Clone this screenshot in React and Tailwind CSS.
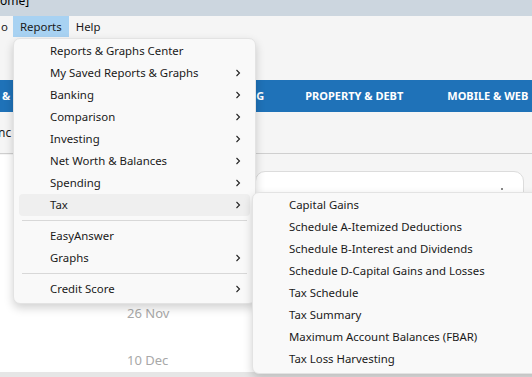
import React from 'react';

const font = { fontFamily: '"Segoe UI", "Noto Sans", "Open Sans", sans-serif' };

const Chevron = () => (
  <svg width="8" height="8" viewBox="0 0 8 8" className="text-[#222]">
    <path d="M2.5 1 L5.5 4 L2.5 7" fill="none" stroke="currentColor" strokeWidth="1.1" />
  </svg>
);

const mainItems = [
  { label: 'Reports & Graphs Center' },
  { label: 'My Saved Reports & Graphs', sub: true },
  { label: 'Banking', sub: true },
  { label: 'Comparison', sub: true },
  { label: 'Investing', sub: true },
  { label: 'Net Worth & Balances', sub: true },
  { label: 'Spending', sub: true },
  { label: 'Tax', sub: true, active: true },
  { sep: true },
  { label: 'EasyAnswer' },
  { label: 'Graphs', sub: true },
  { sep: true },
  { label: 'Credit Score', sub: true },
];

const taxItems = [
  'Capital Gains',
  'Schedule A-Itemized Deductions',
  'Schedule B-Interest and Dividends',
  'Schedule D-Capital Gains and Losses',
  'Tax Schedule',
  'Tax Summary',
  'Maximum Account Balances (FBAR)',
  'Tax Loss Harvesting',
];

const App = () => {
  return (
    <div className="relative w-[532px] h-[377px] overflow-hidden bg-[#f5f5f5] text-[11.4px] text-[#1a1a1a]" style={font}>
      {/* title bar */}
      <div className="h-[16px] bg-[#ccd6df] overflow-hidden">
        <div className="-mt-[7px] leading-[16px] text-[12px] text-black">ome]</div>
      </div>
      {/* menu bar */}
      <div className="h-[21px] flex items-stretch bg-[#f5f5f5]">
        <div className="w-[13px] overflow-hidden flex items-center justify-end pr-[5px]">
          <span>o</span>
        </div>
        <div className="px-[7px] flex items-center bg-[#a8d2f2]">Reports</div>
        <div className="px-[7px] flex items-center">Help</div>
      </div>
      <div className="h-[43px]" />
      {/* blue nav */}
      <div className="h-[32px] bg-[#1f72b8] flex items-center text-white font-bold text-[11px] whitespace-nowrap">
        <span className="ml-[2px]">&amp;</span>
        <span className="ml-[246px]">G</span>
        <span className="ml-[41px]">PROPERTY &amp; DEBT</span>
        <span className="ml-[44px]">MOBILE &amp; WEB</span>
      </div>
      {/* sub toolbar */}
      <div className="h-[42px] border-b border-[#cfcfcf] flex items-center">
        <span className="-ml-[2px] text-[12px]">nc</span>
      </div>
      {/* content */}
      <div className="flex">
        <div className="w-[255px]" />
        <div className="mt-[17px] w-[269px] h-[210px] bg-white border border-[#dcdcdc] rounded-t-[10px] relative">
          <div className="absolute right-[20px] top-[16px] w-[2px] h-[2px] bg-[#888]" />
        </div>
      </div>
      <div className="absolute left-[0px] top-[155px] w-[255px] h-[222px] bg-white flex flex-col items-start">
        <div className="ml-[127px] mt-[149px] text-[#a8a8a8] text-[13px]">26 Nov</div>
        <div className="ml-[127px] mt-[27px] text-[#a8a8a8] text-[13px]">10 Dec</div>
      </div>
      <div className="absolute left-0 right-0 bottom-0 h-[5px] bg-[#e6e6e6]" />

      {/* main dropdown */}
      <div className="absolute left-[13px] top-[38px] w-[243px] bg-[#f9f9f9] rounded-[7px] border border-[#e3e3e3] shadow-[0_4px_10px_rgba(0,0,0,0.18)] pt-[1px] pb-[3px] px-[5px]">
        {mainItems.map((it, i) =>
          it.sep ? (
            <div key={i} className="h-[9px] flex items-center px-[3px]">
              <div className="h-px w-full bg-[#d8d8d8]" />
            </div>
          ) : (
            <div
              key={i}
              className={`h-[22px] flex items-center pl-[31px] pr-[8px] rounded-[4px] ${it.active ? 'bg-[#efefef]' : ''}`}
            >
              <span className="flex-1 whitespace-nowrap">{it.label}</span>
              {it.sub && <Chevron />}
            </div>
          )
        )}
      </div>

      {/* tax submenu */}
      <div className="absolute left-[252px] top-[192px] w-[300px] bg-[#f9f9f9] rounded-[7px] border border-[#e3e3e3] shadow-[0_4px_10px_rgba(0,0,0,0.18)] pt-[1px] pb-[3px]">
        {taxItems.map((t) => (
          <div key={t} className="h-[22px] flex items-center pl-[36px] whitespace-nowrap">
            {t}
          </div>
        ))}
      </div>
    </div>
  );
};

export default App;
